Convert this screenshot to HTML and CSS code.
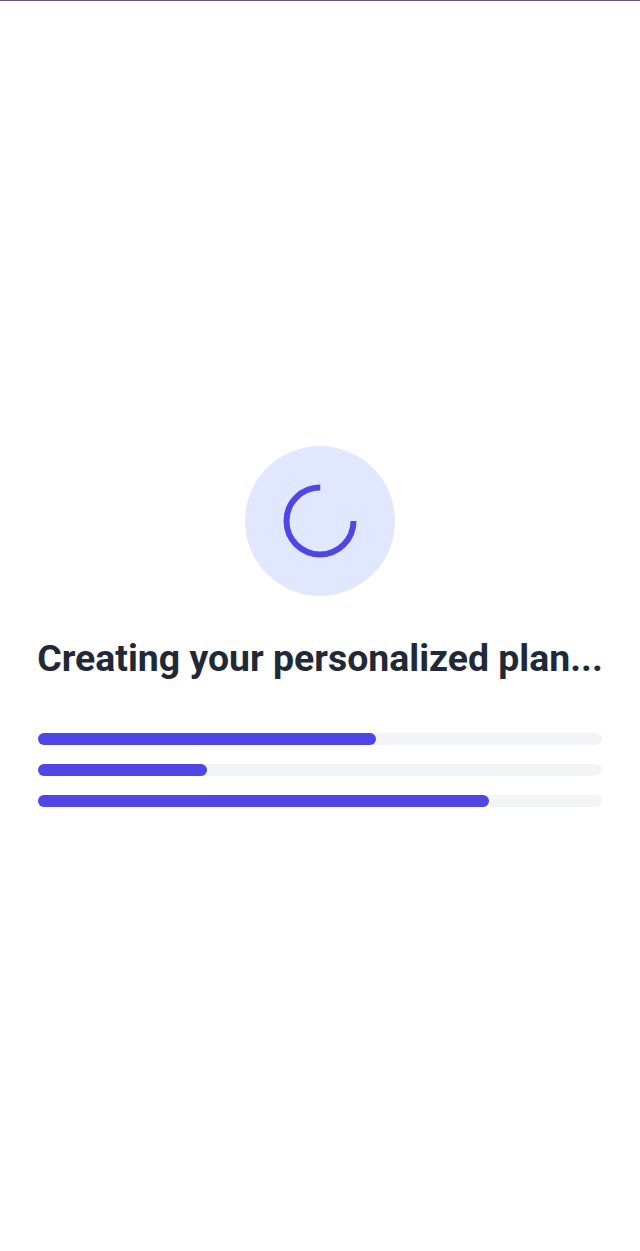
FILE: index.html
```html
<!DOCTYPE html>
<html lang="en">
<head>
    <meta charset="UTF-8">
    <meta name="viewport" content="width=device-width, initial-scale=1.0">
    <title>Creating your plan</title>
    <link rel="stylesheet" href="styles.css">
</head>
<body>
    <div class="loading-screen">
        <div class="spinner-circle">
            <svg class="spinner" width="74" height="74" viewBox="0 0 74 74">
                <circle cx="37" cy="37" r="33.5" fill="none" stroke="#4f46e5" stroke-width="6"
                        stroke-dasharray="157.9 210.5"></circle>
            </svg>
        </div>

        <h1 class="loading-title">Creating your personalized plan...</h1>

        <div class="bars">
            <div class="bar"><div class="bar-fill" style="width: 60%;"></div></div>
            <div class="bar"><div class="bar-fill" style="width: 30%;"></div></div>
            <div class="bar"><div class="bar-fill" style="width: 80%;"></div></div>
        </div>
    </div>
</body>
</html>
```

FILE: styles.css
```css
body {
    margin: 0;
    background-color: #ffffff;
    font-family: Roboto, 'Liberation Sans', sans-serif;
    border-top: 1px solid #6b5a7e;
}

.loading-screen {
    min-height: 1250px;
    display: flex;
    flex-direction: column;
    align-items: center;
    justify-content: center;
    padding: 0 38px;
    box-sizing: border-box;
}

.spinner-circle {
    width: 150px;
    height: 150px;
    border-radius: 50%;
    background-color: #e0e7ff;
    display: flex;
    align-items: center;
    justify-content: center;
}

.loading-title {
    margin: 40px 0 53px;
    font-size: 37.4px;
    font-weight: 700;
    color: #1f2937;
    text-align: center;
    white-space: nowrap;
}

.bars {
    width: 100%;
    display: flex;
    flex-direction: column;
    gap: 19px;
}

.bar {
    height: 12px;
    background-color: #f3f4f6;
    border-radius: 6px;
}

.bar-fill {
    height: 100%;
    background-color: #4f46e5;
    border-radius: 6px;
}
```
